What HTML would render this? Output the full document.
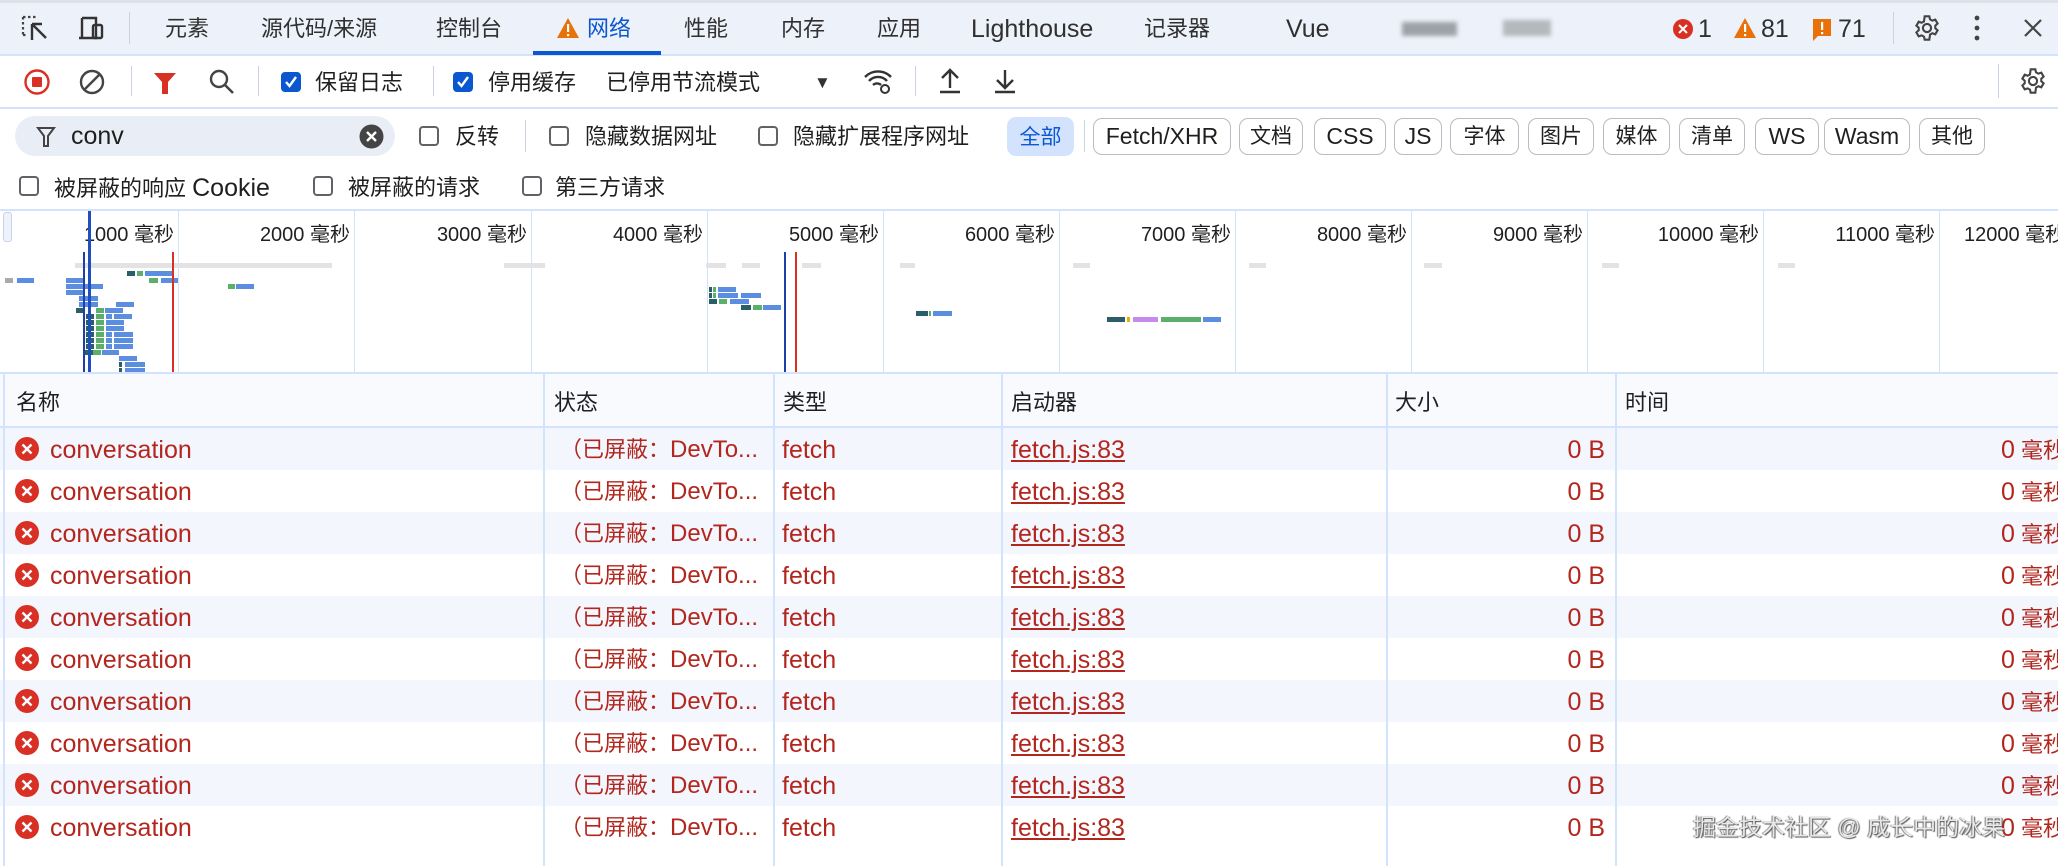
<!DOCTYPE html>
<html><head><meta charset="utf-8"><style>
*{box-sizing:border-box;margin:0;padding:0}
body{width:2058px;height:866px;overflow:hidden;background:#fff;font-family:"Liberation Sans","Noto Sans CJK SC",sans-serif;color:#1f1f1f;position:relative;font-size:22px;line-height:30px}
.a{position:absolute;white-space:nowrap}
.tabbar{position:absolute;left:0;top:0;width:2058px;height:56px;background:#edf1f9;border-bottom:2px solid #d3e3fd;border-top:3px solid #dde1e8}
.tab{position:absolute;top:14px;font-size:22px;color:#303030;line-height:30px}
.lt{font-size:25px}
.sep{position:absolute;width:1px;background:#c9d2e0}
.cb{position:absolute;width:20px;height:20px;border:2px solid #5f6368;border-radius:4px;background:#fff}
.cb.on{background:#0b57d0;border-color:#0b57d0}
.pill{position:absolute;top:118px;height:37px;border:1.5px solid #b8bcc4;border-radius:9px;font-size:21px;line-height:35px;text-align:center;color:#1f1f1f}
.bar{position:absolute;height:5px}
.vl{position:absolute;top:211px;height:162px;width:1px;background:#d3e3fd}
.lbl{position:absolute;top:220px;font-size:20px;color:#1f1f1f;text-align:right;width:170px}
.row{position:absolute;left:0;width:2058px;height:42px}
.col{position:absolute;top:374px;height:492px;width:1.5px;background:#d3e3fd}
.rt{position:absolute;font-size:22px;color:#b3261e;line-height:42px;top:1px}
.rt .lt{font-size:25px}
</style></head><body>
<div class="tabbar"></div>
<svg class="a" style="left:20px;top:14px" width="32" height="30" viewBox="0 0 32 30"><path d="M3 3h14M3 3v18M3 21h4" stroke="#444" stroke-width="2.2" stroke-dasharray="2.5 2.5" fill="none"/><path d="M12 10v16M12 10l14 14M12 10h10" stroke="#333" stroke-width="2.4" fill="none"/></svg>
<svg class="a" style="left:76px;top:14px" width="32" height="30" viewBox="0 0 32 30"><path d="M6 4h14v20H3M6 4v20" stroke="#333" stroke-width="2.4" fill="none"/><rect x="17" y="11" width="9" height="13" rx="1.5" stroke="#333" stroke-width="2.4" fill="none"/></svg>
<div class="sep" style="left:129px;top:12px;height:32px"></div>
<div class="tab" style="left:165px">元素</div>
<div class="tab" style="left:261px">源代码/来源</div>
<div class="tab" style="left:436px">控制台</div>
<svg class="a" style="left:556px;top:17px" width="24" height="22" viewBox="0 0 24 22"><path d="M12 1L23 21H1Z" fill="#e8710a"/><rect x="11" y="7" width="2.2" height="8" fill="#fff"/><rect x="11" y="17" width="2.2" height="2.2" fill="#fff"/></svg>
<div class="tab" style="left:587px;color:#0b57d0">网络</div>
<div class="a" style="left:533px;top:51px;width:128px;height:4px;background:#0b57d0"></div>
<div class="tab" style="left:684px">性能</div>
<div class="tab" style="left:781px">内存</div>
<div class="tab" style="left:877px">应用</div>
<div class="tab lt" style="left:971px">Lighthouse</div>
<div class="tab" style="left:1144px">记录器</div>
<div class="tab lt" style="left:1286px">Vue</div>
<div class="a" style="left:1402px;top:22px;width:55px;height:14px;background:#9ea2a8;filter:blur(2px)"></div>
<div class="a" style="left:1503px;top:20px;width:48px;height:16px;background:#b5b8bd;filter:blur(2px)"></div>
<svg class="a" style="left:1672px;top:18px" width="22" height="22"><circle cx="11" cy="11" r="10" fill="#d93025"/><path d="M7 7l8 8M15 7l-8 8" stroke="#fff" stroke-width="2"/></svg>
<div class="tab lt" style="left:1698px">1</div>
<svg class="a" style="left:1733px;top:17px" width="24" height="22" viewBox="0 0 24 22"><path d="M12 1L23 21H1Z" fill="#e8710a"/><rect x="11" y="7" width="2.2" height="8" fill="#fff"/><rect x="11" y="17" width="2.2" height="2.2" fill="#fff"/></svg>
<div class="tab lt" style="left:1761px">81</div>
<svg class="a" style="left:1812px;top:18px" width="20" height="24"><path d="M1 1h18v17H6l-5 5Z" fill="#e8710a"/><rect x="9" y="4" width="2.2" height="8" fill="#fff"/><rect x="9" y="14" width="2.2" height="2.2" fill="#fff"/></svg>
<div class="tab lt" style="left:1838px">71</div>
<div class="sep" style="left:1893px;top:12px;height:32px"></div>
<svg class="a" style="left:1913px;top:14px" width="28" height="28" viewBox="0 0 24 24"><path d="M12 8.5a3.5 3.5 0 1 0 0 7a3.5 3.5 0 1 0 0-7zM10 2h4l.6 2.6 2 1.1 2.5-.9 2 3.4-2 1.8v2.2l2 1.8-2 3.4-2.5-.9-2 1.1L14 22h-4l-.6-2.6-2-1.1-2.5.9-2-3.4 2-1.8v-2.2l-2-1.8 2-3.4 2.5.9 2-1.1Z" fill="none" stroke="#444" stroke-width="1.8"/></svg>
<svg class="a" style="left:1972px;top:14px" width="10" height="28"><circle cx="5" cy="4" r="2.4" fill="#444"/><circle cx="5" cy="14" r="2.4" fill="#444"/><circle cx="5" cy="24" r="2.4" fill="#444"/></svg>
<svg class="a" style="left:2022px;top:17px" width="22" height="22"><path d="M3 3l16 16M19 3L3 19" stroke="#444" stroke-width="2.2"/></svg>

<!-- toolbar -->
<svg class="a" style="left:23px;top:68px" width="28" height="28"><circle cx="14" cy="14" r="11.5" fill="none" stroke="#d93025" stroke-width="2.4"/><rect x="9" y="9" width="10" height="10" rx="1" fill="#d93025"/></svg>
<svg class="a" style="left:78px;top:68px" width="28" height="28"><circle cx="14" cy="14" r="11" fill="none" stroke="#444" stroke-width="2.4"/><path d="M6 22L22 6" stroke="#444" stroke-width="2.4"/></svg>
<div class="sep" style="left:131px;top:66px;height:30px"></div>
<svg class="a" style="left:152px;top:70px" width="26" height="26"><path d="M2 3h22l-8 9v12h-6V12Z" fill="#d93025"/></svg>
<svg class="a" style="left:208px;top:68px" width="28" height="28"><circle cx="11" cy="11" r="8" fill="none" stroke="#444" stroke-width="2.4"/><path d="M17 17l8 8" stroke="#444" stroke-width="2.6"/></svg>
<div class="sep" style="left:258px;top:66px;height:30px"></div>
<div class="cb on" style="left:281px;top:72px"></div><svg class="a" style="left:284px;top:75px" width="14" height="14"><path d="M2 7l3.5 4L12 2" stroke="#fff" stroke-width="2.4" fill="none"/></svg>
<div class="a" style="left:315px;top:68px">保留日志</div>
<div class="sep" style="left:433px;top:66px;height:30px"></div>
<div class="cb on" style="left:453px;top:72px"></div><svg class="a" style="left:456px;top:75px" width="14" height="14"><path d="M2 7l3.5 4L12 2" stroke="#fff" stroke-width="2.4" fill="none"/></svg>
<div class="a" style="left:488px;top:68px">停用缓存</div>
<div class="a" style="left:606px;top:68px">已停用节流模式</div>
<div class="a" style="left:814px;top:68px;font-size:17px;color:#333">▼</div>
<svg class="a" style="left:862px;top:66px" width="32" height="30" viewBox="0 0 32 30"><path d="M3 11a18 18 0 0 1 26 0M7 15a12 12 0 0 1 18 0M11 19a6 6 0 0 1 8 0" stroke="#333" stroke-width="2.4" fill="none"/><circle cx="23" cy="23" r="4" fill="#fff" stroke="#333" stroke-width="2"/></svg>
<div class="sep" style="left:915px;top:66px;height:30px"></div>
<svg class="a" style="left:938px;top:67px" width="24" height="28"><path d="M12 3v18M4 11l8-8 8 8M2 25h20" stroke="#333" stroke-width="2.4" fill="none"/></svg>
<svg class="a" style="left:993px;top:67px" width="24" height="28"><path d="M12 3v18M4 13l8 8 8-8M2 25h20" stroke="#333" stroke-width="2.4" fill="none"/></svg>
<div class="sep" style="left:1998px;top:64px;height:34px"></div>
<svg class="a" style="left:2019px;top:67px" width="28" height="28" viewBox="0 0 24 24"><path d="M12 8.5a3.5 3.5 0 1 0 0 7a3.5 3.5 0 1 0 0-7zM10 2h4l.6 2.6 2 1.1 2.5-.9 2 3.4-2 1.8v2.2l2 1.8-2 3.4-2.5-.9-2 1.1L14 22h-4l-.6-2.6-2-1.1-2.5.9-2-3.4 2-1.8v-2.2l-2-1.8 2-3.4 2.5.9 2-1.1Z" fill="none" stroke="#444" stroke-width="1.8"/></svg>
<div class="a" style="left:0;top:107px;width:2058px;height:2px;background:#d3e3fd"></div>

<!-- filter row -->
<div class="a" style="left:15px;top:116px;width:380px;height:40px;border-radius:20px;background:#e9eef6"></div>
<svg class="a" style="left:36px;top:126px" width="20" height="22"><path d="M2 2h16l-6 8v10h-4V10Z" fill="none" stroke="#444" stroke-width="2"/></svg>
<div class="a lt" style="left:71px;top:121px;color:#1f1f1f">conv</div>
<svg class="a" style="left:359px;top:124px" width="25" height="25"><circle cx="12.5" cy="12.5" r="12" fill="#444"/><path d="M8 8l9 9M17 8l-9 9" stroke="#fff" stroke-width="2.4"/></svg>
<div class="cb" style="left:419px;top:126px"></div><div class="a" style="left:455px;top:122px">反转</div>
<div class="sep" style="left:525px;top:120px;height:32px"></div>
<div class="cb" style="left:549px;top:126px"></div><div class="a" style="left:585px;top:122px">隐藏数据网址</div>
<div class="cb" style="left:758px;top:126px"></div><div class="a" style="left:793px;top:122px">隐藏扩展程序网址</div>
<div class="a" style="left:1007px;top:117px;width:67px;height:39px;border-radius:9px;background:#d3e3fd;color:#0b57d0;font-size:21px;line-height:41px;text-align:center">全部</div>
<div class="sep" style="left:1084px;top:120px;height:32px"></div>
<div class="pill" style="left:1093px;width:138px;font-size:23px">Fetch/XHR</div>
<div class="pill" style="left:1239px;width:64px">文档</div>
<div class="pill" style="left:1314px;width:72px;font-size:23px">CSS</div>
<div class="pill" style="left:1394px;width:48px;font-size:23px">JS</div>
<div class="pill" style="left:1450px;width:69px">字体</div>
<div class="pill" style="left:1528px;width:66px">图片</div>
<div class="pill" style="left:1603px;width:67px">媒体</div>
<div class="pill" style="left:1679px;width:66px">清单</div>
<div class="pill" style="left:1755px;width:64px;font-size:23px">WS</div>
<div class="pill" style="left:1824px;width:86px;font-size:23px">Wasm</div>
<div class="pill" style="left:1919px;width:66px">其他</div>

<div class="cb" style="left:19px;top:176px"></div><div class="a" style="left:54px;top:173px">被屏蔽的响应 <span class="lt">Cookie</span></div>
<div class="cb" style="left:313px;top:176px"></div><div class="a" style="left:348px;top:173px">被屏蔽的请求</div>
<div class="cb" style="left:522px;top:176px"></div><div class="a" style="left:555px;top:173px">第三方请求</div>

<!-- timeline -->
<div class="a" style="left:0;top:209px;width:2058px;height:2px;background:#d3e3fd"></div>
<div class="a" style="left:3px;top:212px;width:9px;height:30px;border:1px solid #c6d3ea;border-radius:3px;background:#eef2fa"></div>
<div class="vl" style="left:178px"></div><div class="vl" style="left:354px"></div><div class="vl" style="left:531px"></div><div class="vl" style="left:707px"></div><div class="vl" style="left:883px"></div><div class="vl" style="left:1059px"></div><div class="vl" style="left:1235px"></div><div class="vl" style="left:1411px"></div><div class="vl" style="left:1587px"></div><div class="vl" style="left:1763px"></div><div class="vl" style="left:1939px"></div>
<div class="lbl" style="left:4px">1000 毫秒</div><div class="lbl" style="left:180px">2000 毫秒</div><div class="lbl" style="left:357px">3000 毫秒</div><div class="lbl" style="left:533px">4000 毫秒</div><div class="lbl" style="left:709px">5000 毫秒</div><div class="lbl" style="left:885px">6000 毫秒</div><div class="lbl" style="left:1061px">7000 毫秒</div><div class="lbl" style="left:1237px">8000 毫秒</div><div class="lbl" style="left:1413px">9000 毫秒</div><div class="lbl" style="left:1589px">10000 毫秒</div><div class="lbl" style="left:1765px">11000 毫秒</div><div class="a" style="left:1964px;top:220px;font-size:20px">12000 毫秒</div>
<div class="bar" style="left:75px;top:263px;width:257px;background:#e3e3e3"></div>
<div class="bar" style="left:504px;top:263px;width:41px;background:#e3e3e3"></div>
<div class="bar" style="left:706px;top:263px;width:20px;background:#e3e3e3"></div><div class="bar" style="left:742px;top:263px;width:18px;background:#e3e3e3"></div><div class="bar" style="left:802px;top:263px;width:19px;background:#e3e3e3"></div>
<div class="bar" style="left:900px;top:263px;width:15px;background:#e3e3e3"></div><div class="bar" style="left:1073px;top:263px;width:17px;background:#e3e3e3"></div><div class="bar" style="left:1249px;top:263px;width:17px;background:#e3e3e3"></div><div class="bar" style="left:1424px;top:263px;width:18px;background:#e3e3e3"></div><div class="bar" style="left:1602px;top:263px;width:17px;background:#e3e3e3"></div><div class="bar" style="left:1778px;top:263px;width:17px;background:#e3e3e3"></div>
<div class="bar" style="left:127px;top:271px;width:8px;background:#2a5f6a"></div><div class="bar" style="left:137px;top:271px;width:6px;background:#5ab06a"></div><div class="bar" style="left:145px;top:271px;width:27px;background:#5b8de0"></div>
<div class="bar" style="left:5px;top:278px;width:8px;background:#aaa"></div><div class="bar" style="left:17px;top:278px;width:17px;background:#5b8de0"></div><div class="bar" style="left:66px;top:278px;width:17px;background:#5b8de0"></div><div class="bar" style="left:149px;top:278px;width:9px;background:#5ab06a"></div><div class="bar" style="left:161px;top:278px;width:17px;background:#5b8de0"></div>
<div class="bar" style="left:66px;top:284px;width:37px;background:#5b8de0"></div><div class="bar" style="left:228px;top:284px;width:7px;background:#5ab06a"></div><div class="bar" style="left:236px;top:284px;width:18px;background:#5b8de0"></div>
<div class="bar" style="left:66px;top:290px;width:17px;background:#5b8de0"></div>
<div class="bar" style="left:79px;top:296px;width:19px;background:#5b8de0"></div>
<div class="bar" style="left:79px;top:302px;width:19px;background:#5b8de0"></div><div class="bar" style="left:116px;top:302px;width:18px;background:#5b8de0"></div>
<div class="bar" style="left:76px;top:308px;width:9px;background:#2a5f6a"></div><div class="bar" style="left:96px;top:308px;width:8px;background:#5ab06a"></div><div class="bar" style="left:105px;top:308px;width:18px;background:#5b8de0"></div>
<div class="bar" style="left:86px;top:314px;width:8px;background:#2a5f6a"></div><div class="bar" style="left:96px;top:314px;width:8px;background:#5ab06a"></div><div class="bar" style="left:106px;top:314px;width:6px;background:#5b8de0"></div><div class="bar" style="left:114px;top:314px;width:18px;background:#5b8de0"></div>
<div class="bar" style="left:86px;top:320px;width:8px;background:#2a5f6a"></div><div class="bar" style="left:96px;top:320px;width:8px;background:#5ab06a"></div><div class="bar" style="left:106px;top:320px;width:18px;background:#5b8de0"></div>
<div class="bar" style="left:86px;top:326px;width:8px;background:#2a5f6a"></div><div class="bar" style="left:96px;top:326px;width:8px;background:#5ab06a"></div><div class="bar" style="left:106px;top:326px;width:18px;background:#5b8de0"></div>
<div class="bar" style="left:86px;top:332px;width:8px;background:#2a5f6a"></div><div class="bar" style="left:96px;top:332px;width:8px;background:#5ab06a"></div><div class="bar" style="left:106px;top:332px;width:6px;background:#5b8de0"></div><div class="bar" style="left:114px;top:332px;width:19px;background:#5b8de0"></div>
<div class="bar" style="left:86px;top:338px;width:8px;background:#2a5f6a"></div><div class="bar" style="left:96px;top:338px;width:8px;background:#5ab06a"></div><div class="bar" style="left:106px;top:338px;width:6px;background:#5b8de0"></div><div class="bar" style="left:114px;top:338px;width:19px;background:#5b8de0"></div>
<div class="bar" style="left:86px;top:344px;width:8px;background:#2a5f6a"></div><div class="bar" style="left:96px;top:344px;width:8px;background:#5ab06a"></div><div class="bar" style="left:106px;top:344px;width:6px;background:#5b8de0"></div><div class="bar" style="left:114px;top:344px;width:19px;background:#5b8de0"></div>
<div class="bar" style="left:83px;top:350px;width:10px;background:#2a5f6a"></div><div class="bar" style="left:93px;top:350px;width:8px;background:#5ab06a"></div><div class="bar" style="left:102px;top:350px;width:17px;background:#5b8de0"></div>
<div class="bar" style="left:119px;top:356px;width:18px;background:#5b8de0"></div>
<div class="bar" style="left:119px;top:362px;width:3px;background:#2a5f6a"></div><div class="bar" style="left:125px;top:362px;width:20px;background:#5b8de0"></div>
<div class="bar" style="left:119px;top:368px;width:3px;background:#2a5f6a"></div><div class="bar" style="left:125px;top:368px;width:20px;background:#5b8de0"></div>
<div class="a" style="left:83px;top:252px;width:2px;height:120px;background:#1d3fa6"></div>
<div class="a" style="left:88px;top:211px;width:3px;height:162px;background:#1d4fbf"></div>
<div class="a" style="left:172px;top:252px;width:1.5px;height:120px;background:#d93025"></div>
<div class="bar" style="left:709px;top:287px;width:3px;background:#2a5f6a"></div><div class="bar" style="left:713px;top:287px;width:3px;background:#5ab06a"></div><div class="bar" style="left:718px;top:287px;width:18px;background:#5b8de0"></div>
<div class="bar" style="left:709px;top:293px;width:3px;background:#2a5f6a"></div><div class="bar" style="left:713px;top:293px;width:3px;background:#5ab06a"></div><div class="bar" style="left:718px;top:293px;width:20px;background:#5b8de0"></div><div class="bar" style="left:741px;top:293px;width:20px;background:#5b8de0"></div>
<div class="bar" style="left:709px;top:299px;width:8px;background:#2a5f6a"></div><div class="bar" style="left:719px;top:299px;width:8px;background:#5ab06a"></div><div class="bar" style="left:730px;top:299px;width:19px;background:#5b8de0"></div>
<div class="bar" style="left:741px;top:305px;width:10px;background:#2a5f6a"></div><div class="bar" style="left:753px;top:305px;width:9px;background:#5ab06a"></div><div class="bar" style="left:763px;top:305px;width:18px;background:#5b8de0"></div>
<div class="a" style="left:784px;top:252px;width:2px;height:120px;background:#1d3fa6"></div>
<div class="a" style="left:795px;top:252px;width:1.5px;height:120px;background:#d93025"></div>
<div class="bar" style="left:916px;top:311px;width:12px;background:#2a5f6a"></div><div class="bar" style="left:929px;top:311px;width:2px;background:#5ab06a"></div><div class="bar" style="left:933px;top:311px;width:19px;background:#5b8de0"></div>
<div class="bar" style="left:1107px;top:317px;width:18px;background:#2a5f6a"></div><div class="bar" style="left:1127px;top:317px;width:3px;background:#e6b200"></div><div class="bar" style="left:1133px;top:317px;width:25px;background:#c58af0"></div><div class="bar" style="left:1161px;top:317px;width:40px;background:#5ab06a"></div><div class="bar" style="left:1203px;top:317px;width:18px;background:#5b8de0"></div>
<div class="a" style="left:0;top:372px;width:2058px;height:2px;background:#d3e3fd"></div>

<!-- table -->
<div class="a" style="left:0;top:374px;width:2058px;height:52px;background:#f8fafd"></div>
<div class="a" style="left:0;top:426px;width:2058px;height:2px;background:#d3e3fd"></div>
<div class="row" style="top:428px;background:#f3f6fc"></div>
<div class="row" style="top:512px;background:#f3f6fc"></div>
<div class="row" style="top:596px;background:#f3f6fc"></div>
<div class="row" style="top:680px;background:#f3f6fc"></div>
<div class="row" style="top:764px;background:#f3f6fc"></div>
<div class="col" style="left:3px"></div><div class="col" style="left:543px"></div><div class="col" style="left:773px"></div><div class="col" style="left:1001px"></div><div class="col" style="left:1386px"></div><div class="col" style="left:1615px"></div>
<div class="a" style="left:16px;top:388px">名称</div>
<div class="a" style="left:554px;top:388px">状态</div>
<div class="a" style="left:783px;top:388px">类型</div>
<div class="a" style="left:1011px;top:388px">启动器</div>
<div class="a" style="left:1395px;top:388px">大小</div>
<div class="a" style="left:1625px;top:388px">时间</div>

<div id="rows"></div>
<script>
var h='';for(var i=0;i<10;i++){var t=429+i*42;
h+='<svg class="a" style="left:15px;top:'+(t+8)+'px" width="24" height="24"><circle cx="12" cy="12" r="12" fill="#d93025"/><path d="M7.5 7.5l9 9M16.5 7.5l-9 9" stroke="#fff" stroke-width="2.4"/></svg>';
h+='<div class="rt" style="left:50px;top:'+t+'px"><span class="lt">conversation</span></div>';
h+='<div class="rt" style="left:560px;top:'+t+'px">（已屏蔽：<span class="lt" style="font-size:24px">DevTo...</span></div>';
h+='<div class="rt" style="left:782px;top:'+t+'px"><span class="lt">fetch</span></div>';
h+='<div class="rt" style="left:1011px;top:'+t+'px;text-decoration:underline"><span class="lt">fetch.js:83</span></div>';
h+='<div class="rt" style="left:1400px;width:205px;text-align:right;top:'+t+'px"><span class="lt">0 B</span></div>';
h+='<div class="rt" style="left:1800px;width:265px;text-align:right;top:'+t+'px"><span class="lt">0</span> 毫秒</div>';}
document.getElementById('rows').innerHTML=h;
</script>
<div class="a" style="left:1693px;top:812px;font-size:23px;color:#e8e8e8;text-shadow:1px 1px 1px #555,-1px 0 1px #777">掘金技术社区 @ 成长中的冰果</div>
</body></html>
